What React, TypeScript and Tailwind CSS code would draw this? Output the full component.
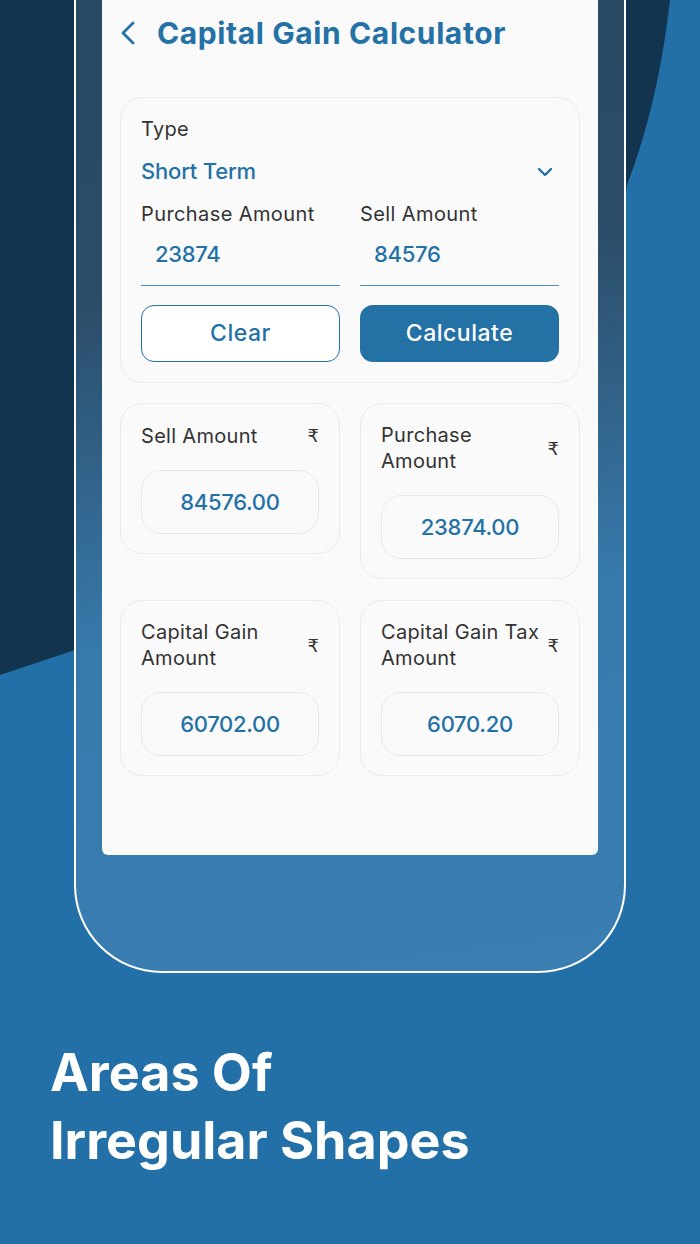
const font = { fontFamily: 'Inter, "Noto Sans", "DejaVu Sans", sans-serif' };

function BackIcon() {
  return (
    <svg width="16" height="24" viewBox="0 0 16 24" fill="none">
      <path d="M13 2 L3 12 L13 22" stroke="#2471a6" strokeWidth="2.8" strokeLinecap="round" strokeLinejoin="round" />
    </svg>
  );
}

function DownIcon() {
  return (
    <svg width="16" height="10" viewBox="0 0 16 10" fill="none">
      <path d="M2 2 L8 8 L14 2" stroke="#2471a6" strokeWidth="2.4" strokeLinecap="round" strokeLinejoin="round" />
    </svg>
  );
}

function ResultCard({ label, value }: { label: string; value: string }) {
  return (
    <div className="flex-1 rounded-[22px] border border-[#ececec] bg-[#fafafa] px-5 pt-[18px] pb-[19px]">
      <div className="flex items-center justify-between gap-1">
        <div className="text-[20px] leading-[26px] tracking-[0.3px] text-[#333333] whitespace-pre-line">{label}</div>
        <span className="text-[18px] text-[#333333]" style={{ fontFamily: '"DejaVu Sans", sans-serif' }}>
          ₹
        </span>
      </div>
      <div className="mt-[21px] flex h-[64px] items-center justify-center rounded-[20px] border border-[#e9e9e9] text-[22px] font-medium tracking-[-0.3px] text-[#2471a6]">
        {value}
      </div>
    </div>
  );
}

export default function App() {
  return (
    <div className="relative h-[1244px] w-[700px] overflow-hidden bg-[#2270a7]" style={font}>
      {/* navy backdrop shape */}
      <svg className="absolute left-0 top-0" width="700" height="700" viewBox="0 0 700 700">
        <path d="M0 0 L670 0 C662 70 648 130 627 185 L560 600 L75 650 L0 675 Z" fill="#12344f" />
      </svg>

      {/* phone */}
      <div className="relative ml-[74px] h-[973px] w-[552px] rounded-b-[88px] border-2 border-t-0 border-white bg-[linear-gradient(172deg,#2b4a64_0%,#2b4b66_28%,#3779ab_62%,#3a7eb2_100%)]">
        <div className="mx-[26px] flex h-[855px] flex-col rounded-b-md bg-[#fafafa] px-[18px]">
          {/* header */}
          <div className="flex h-[66px] items-center gap-[21px]">
            <BackIcon />
            <h1 className="text-[30px] font-bold tracking-[0.6px] text-[#2471a6]">Capital Gain Calculator</h1>
          </div>

          {/* input card */}
          <div className="mt-[31px] rounded-[22px] border border-[#ececec] px-5 pt-[18px] pb-[20px]">
            <div className="text-[20px] leading-[26px] tracking-[0.3px] text-[#333333]">Type</div>
            <div className="mt-[13px] flex items-center justify-between">
              <span className="text-[22px] font-medium tracking-[-0.2px] text-[#2471a6]">Short Term</span>
              <span className="mr-[6px]">
                <DownIcon />
              </span>
            </div>
            <div className="mt-[13px] grid grid-cols-2 gap-5">
              <div>
                <div className="text-[20px] leading-[26px] tracking-[0.4px] text-[#333333]">Purchase Amount</div>
                <div className="mt-[14px] border-b border-[#4d8fc0] pb-[18px] pl-[14px] text-[22px] font-medium leading-[26px] tracking-[-0.3px] text-[#2471a6]">
                  23874
                </div>
              </div>
              <div>
                <div className="text-[20px] leading-[26px] tracking-[0.4px] text-[#333333]">Sell Amount</div>
                <div className="mt-[14px] border-b border-[#4d8fc0] pb-[18px] pl-[14px] text-[22px] font-medium leading-[26px] tracking-[-0.3px] text-[#2471a6]">
                  84576
                </div>
              </div>
            </div>
            <div className="mt-[19px] grid grid-cols-2 gap-5">
              <button className="h-[57px] rounded-[13px] border border-[#2471a6] bg-white text-[23px] font-medium tracking-[0.5px] text-[#2471a6]">
                Clear
              </button>
              <button className="h-[57px] rounded-[13px] bg-[#2471a6] text-[23px] font-medium tracking-[0.5px] text-white">
                Calculate
              </button>
            </div>
          </div>

          {/* results */}
          <div className="mt-[20px] flex items-start gap-5">
            <ResultCard label="Sell Amount" value="84576.00" />
            <ResultCard label={'Purchase\nAmount'} value="23874.00" />
          </div>
          <div className="mt-[21px] flex items-start gap-5">
            <ResultCard label={'Capital Gain\nAmount'} value="60702.00" />
            <ResultCard label={'Capital Gain Tax\nAmount'} value="6070.20" />
          </div>
        </div>
      </div>

      {/* caption */}
      <h2 className="mt-[66px] pl-[50px] text-[52px] font-bold leading-[68px] text-white">
        Areas Of
        <br />
        Irregular Shapes
      </h2>
    </div>
  );
}
